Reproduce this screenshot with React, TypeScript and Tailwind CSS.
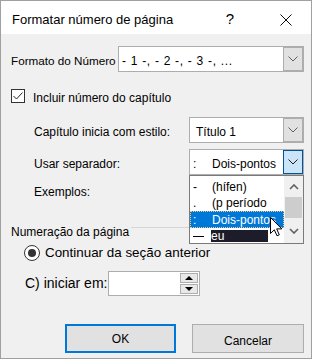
import React from "react";

function Chevron({ dark = false }: { dark?: boolean }) {
  return (
    <svg width="10" height="6" viewBox="0 0 10 6" aria-hidden>
      <path
        d="M0.5 0.5 L5 5 L9.5 0.5"
        fill="none"
        stroke={dark ? "#1a1a1a" : "#606060"}
        strokeWidth="1"
      />
    </svg>
  );
}

function Combo({
  width,
  children,
  active = false,
}: {
  width: string;
  children: React.ReactNode;
  active?: boolean;
}) {
  return (
    <div className={`flex h-full ${width} border border-[#adadad] bg-white`}>
      <div className="flex flex-1 items-center pt-[3px]">{children}</div>
      {/* drop button */}
      <div
        className={`flex w-[20px] items-center justify-center border ${
          active ? "border-[#005499] bg-[#cce4f7]" : "border-[#adadad] bg-[#e1e1e1]"
        }`}
      >
        <Chevron dark={active} />
      </div>
    </div>
  );
}

function ScrollChevron({ up }: { up?: boolean }) {
  return (
    <svg width="10" height="6" viewBox="0 0 10 6" aria-hidden>
      <path
        d={up ? "M1 5 L5 1 L9 5" : "M1 1 L5 5 L9 1"}
        fill="none"
        stroke="#606060"
        strokeWidth="1.6"
      />
    </svg>
  );
}

export default function App() {
  return (
    <div className="relative flex h-[359px] w-[312px] flex-col border border-[#a0a0a0] bg-[#f0f0f0] font-['Liberation_Sans',Arial,sans-serif] text-[12px] text-black">
      {/* Title bar */}
      <div className="flex h-[33px] items-center bg-white pt-[4px]">
        <span className="ml-[11px] text-[13px]">Formatar número de página</span>
        <span className="ml-auto text-[15px] font-light">?</span>
        <svg className="ml-[46px] mr-[19px]" width="12" height="12" viewBox="0 0 12 12" aria-hidden>
          <path d="M0.5 0.5 L11.5 11.5 M11.5 0.5 L0.5 11.5" stroke="#111" strokeWidth="1" />
        </svg>
      </div>

      {/* Formato do Número */}
      <div className="mt-[12px] flex h-[26px] items-center">
        <span className="ml-[10px] w-[107px] whitespace-nowrap pt-[4px] text-[11.7px]">Formato do Número</span>
        <Combo width="w-[186px]">
          <span className="ml-[3px] whitespace-nowrap tracking-[0.7px]">- 1 -, - 2 -, - 3 -, ...</span>
        </Combo>
      </div>

      {/* Incluir número do capítulo */}
      <div className="mt-[17px] flex h-[14px] items-center">
        <div className="ml-[10px] flex h-[14px] w-[14px] items-center justify-center border border-[#333] bg-white">
          <svg width="10" height="8" viewBox="0 0 10 8" aria-hidden>
            <path d="M0.5 4 L3.5 7 L9.5 0.5" fill="none" stroke="#222" strokeWidth="1" />
          </svg>
        </div>
        <span className="ml-[8px] pt-[3px]">Incluir número do capítulo</span>
      </div>

      {/* Capítulo inicia com estilo */}
      <div className="mt-[14px] flex h-[26px] items-center">
        <span className="ml-[33px] w-[155px] pt-[4px]">Capítulo inicia com estilo:</span>
        <Combo width="w-[115px]">
          <span className="ml-[6px]">Título 1</span>
        </Combo>
      </div>

      {/* Usar separador */}
      <div className="mt-[6px] flex h-[26px] items-center">
        <span className="ml-[33px] w-[155px] pt-[4px]">Usar separador:</span>
        <Combo width="w-[115px]" active>
          <span className="ml-[3px] w-[19px]">:</span>
          <span>Dois-pontos</span>
        </Combo>
      </div>

      {/* Exemplos */}
      <div className="mt-[9px] flex h-[16px] items-center">
        <span className="ml-[33px]">Exemplos:</span>
      </div>

      {/* Numeração da página */}
      <div className="mt-[24px] flex h-[16px] items-start">
        <span className="ml-[10px] leading-[16px]">Numeração da página</span>
        <div className="ml-[2px] mr-[7px] mt-[3px] h-px flex-1 bg-[#d5d5d5]" />
      </div>

      {/* Continuar da seção anterior */}
      <div className="mt-[5px] flex h-[16px] items-center">
        <div className="ml-[23px] flex h-[16px] w-[16px] shrink-0 items-center justify-center rounded-full border border-[#333] bg-white">
          <div className="h-[8px] w-[8px] rounded-full bg-[#333]" />
        </div>
        <span className="ml-[5px] whitespace-nowrap text-[13.4px] leading-[16px]">
          Continuar da seção anterior
        </span>
      </div>

      {/* iniciar em */}
      <div className="mt-[10px] flex h-[25px] items-center">
        <span className="ml-[24px] w-[83px] whitespace-nowrap text-[14px]">C) iniciar em:</span>
        <div className="flex h-full w-[92px] border border-[#adadad] bg-white">
          <div className="flex-1" />
          <div className="flex w-[19px] flex-col gap-px py-px pr-px">
            <div className="flex flex-1 items-center justify-center border border-[#adadad] bg-[#e8e8e8]">
              <svg width="8" height="4" viewBox="0 0 8 4" aria-hidden>
                <path d="M0 4 L4 0 L8 4 Z" fill="#000" />
              </svg>
            </div>
            <div className="flex flex-1 items-center justify-center border border-[#adadad] bg-[#e8e8e8]">
              <svg width="8" height="4" viewBox="0 0 8 4" aria-hidden>
                <path d="M0 0 L4 4 L8 0 Z" fill="#000" />
              </svg>
            </div>
          </div>
        </div>
      </div>

      {/* Buttons */}
      <div className="mt-[28px] flex h-[29px]">
        <button
          type="button"
          className="ml-[64px] flex w-[111px] items-center justify-center border-2 border-[#0078d7] bg-[#e1e1e1]"
        >
          OK
        </button>
        <button
          type="button"
          className="ml-[16px] flex w-[112px] items-center justify-center border border-[#adadad] bg-[#e1e1e1] pt-[5px]"
        >
          Cancelar
        </button>
      </div>

      {/* Open separator list */}
      <div className="absolute left-[188px] top-[174px] flex h-[69px] w-[115px] border border-[#7a7a7a] bg-white">
        <div className="flex w-[94px] flex-col overflow-hidden pt-[3px]">
          <div className="flex h-[16px] shrink-0 items-center">
            <span className="ml-[3px] w-[19px]">-</span>
            <span>(hífen)</span>
          </div>
          <div className="flex h-[16px] shrink-0 items-center">
            <span className="ml-[3px] w-[19px]">.</span>
            <span>(p período</span>
          </div>
          <div className="flex h-[17px] shrink-0 items-center border border-dotted border-[#e9c98d] bg-[#0078d7] text-white">
            <span className="ml-[2px] w-[19px]">:</span>
            <span>Dois-pontos</span>
          </div>
          <div className="flex h-[14px] shrink-0 items-end">
            <span className="mb-[5px] ml-[3px] h-px w-[11px] bg-black" />
            <span className="ml-[7px] h-[12px] w-[57px] bg-[#1c1c2a] text-[12px] leading-[12px] text-white">eu</span>
          </div>
        </div>
        {/* scrollbar */}
        <div className="flex w-[19px] flex-col bg-[#f0f0f0]">
          <div className="flex h-[21px] items-center justify-center pt-[1px]">
            <ScrollChevron up />
          </div>
          <div className="mx-[1px] h-[21px] bg-[#cdcdcd]" />
          <div className="flex flex-1 items-center justify-center">
            <ScrollChevron />
          </div>
        </div>
      </div>

      {/* Mouse pointer */}
      <svg className="absolute left-[269px] top-[216px]" width="13" height="20" viewBox="0 0 13 20" aria-hidden>
        <path
          d="M0.5 0.5 L0.5 16.5 L4.3 12.8 L7 18.8 L9.3 17.8 L6.7 11.9 L11.8 11.9 Z"
          fill="#fff"
          stroke="#000"
          strokeWidth="1"
          strokeLinejoin="round"
        />
      </svg>
    </div>
  );
}
